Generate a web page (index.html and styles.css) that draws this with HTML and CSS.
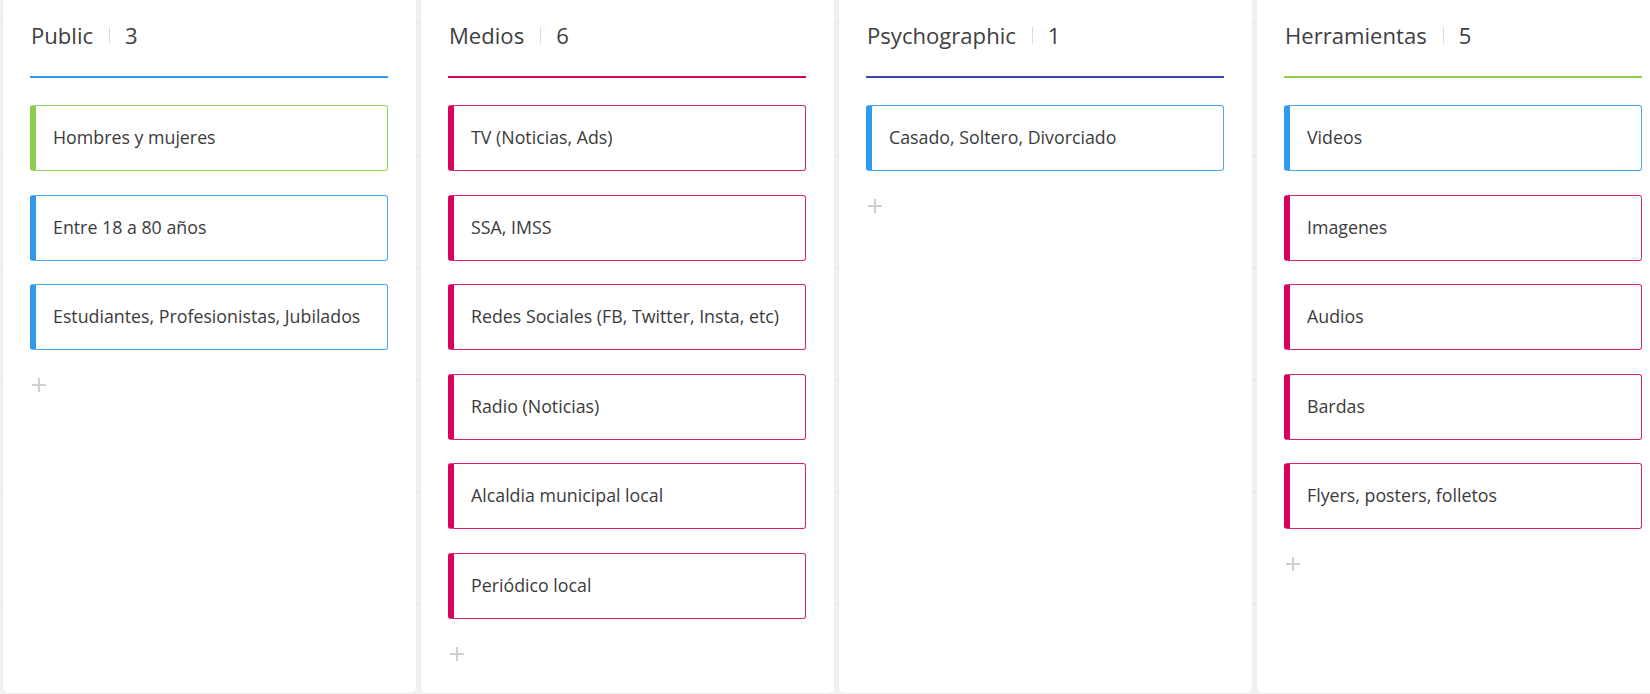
FILE: index.html
```html
<!DOCTYPE html>
<html lang="es">
<head>
<meta charset="utf-8">
<title>Board</title>
<link rel="stylesheet" href="styles.css">
</head>
<body>
<div class="board">
  <section class="col">
    <header class="col-head head-blue"><span class="col-title">Public</span><span class="sep"></span><span class="count">3</span></header>
    <div class="card card-green">Hombres y mujeres</div>
    <div class="card card-blue">Entre 18 a 80 años</div>
    <div class="card card-blue">Estudiantes, Profesionistas, Jubilados</div>
    <div class="add"></div>
  </section>
  <section class="col">
    <header class="col-head head-pink"><span class="col-title">Medios</span><span class="sep"></span><span class="count">6</span></header>
    <div class="card card-pink">TV (Noticias, Ads)</div>
    <div class="card card-pink">SSA, IMSS</div>
    <div class="card card-pink">Redes Sociales (FB, Twitter, Insta, etc)</div>
    <div class="card card-pink">Radio (Noticias)</div>
    <div class="card card-pink">Alcaldia municipal local</div>
    <div class="card card-pink">Periódico local</div>
    <div class="add"></div>
  </section>
  <section class="col">
    <header class="col-head head-indigo"><span class="col-title">Psychographic</span><span class="sep"></span><span class="count">1</span></header>
    <div class="card card-blue">Casado, Soltero, Divorciado</div>
    <div class="add"></div>
  </section>
  <section class="col">
    <header class="col-head head-green"><span class="col-title">Herramientas</span><span class="sep"></span><span class="count">5</span></header>
    <div class="card card-blue">Videos</div>
    <div class="card card-pink">Imagenes</div>
    <div class="card card-pink">Audios</div>
    <div class="card card-pink">Bardas</div>
    <div class="card card-pink">Flyers, posters, folletos</div>
    <div class="add"></div>
  </section>
</div>
</body>
</html>
```

FILE: styles.css
```css
html, body {
  margin: 0;
  padding: 0;
  height: 694px;
  overflow: hidden;
}

body {
  font-family: "Open Sans", "Noto Sans", sans-serif;
  color: #3b3b3b;
  background-color: #f1f1f1;
  background-image: repeating-linear-gradient(180deg, #f1f1f1 0, #f1f1f1 111px, #e5e5e5 111px, #e5e5e5 112px);
  background-position: 0 45px;
}

.board {
  display: flex;
  gap: 5px;
  padding-left: 3px;
  margin-top: -3px;
}

.col {
  flex: 0 0 413px;
  height: 696px;
  box-sizing: border-box;
  background: #fff;
  border-radius: 5px;
  box-shadow: 0 0 1px rgba(0, 0, 0, 0.12);
  padding: 22.5px 28px 0 27px;
}

.col-head {
  display: flex;
  align-items: center;
  height: 30px;
  padding-bottom: 26.5px;
  border-bottom: 2px solid;
  margin-bottom: 27px;
  font-size: 22.1px;
  line-height: 30px;
  color: #404040;
  padding-left: 1px;
}

.head-blue { border-color: #2f9bf0; }
.head-pink { border-color: #d9005b; }
.head-indigo { border-color: #3c47b1; }
.head-green { border-color: #8dcf4b; }

.sep {
  width: 1px;
  height: 17px;
  background: #dcdcdc;
  margin: 2px 15px 0 16px;
}

.card {
  box-sizing: border-box;
  height: 66px;
  display: flex;
  align-items: center;
  border: 1px solid;
  border-left-width: 6px;
  border-radius: 3px;
  padding: 0 0 2px 17px;
  font-size: 17.8px;
  margin-bottom: 23.5px;
  color: #3b3b3b;
}

.card-blue { border-color: #4aa8f3; border-left-color: #2f9bf0; }
.card-pink { border-color: #dc1f6e; border-left-color: #d9005b; }
.card-green { border-color: #95d35a; border-left-color: #8dcf4b; }

.add {
  position: relative;
  width: 14px;
  height: 14px;
  margin: 28px 0 0 2px;
}

.add::before,
.add::after {
  content: "";
  position: absolute;
  background: #cfcfcf;
}

.add::before {
  left: 0;
  top: 6px;
  width: 14px;
  height: 2px;
}

.add::after {
  left: 6px;
  top: 0;
  width: 2px;
  height: 14px;
}
```
